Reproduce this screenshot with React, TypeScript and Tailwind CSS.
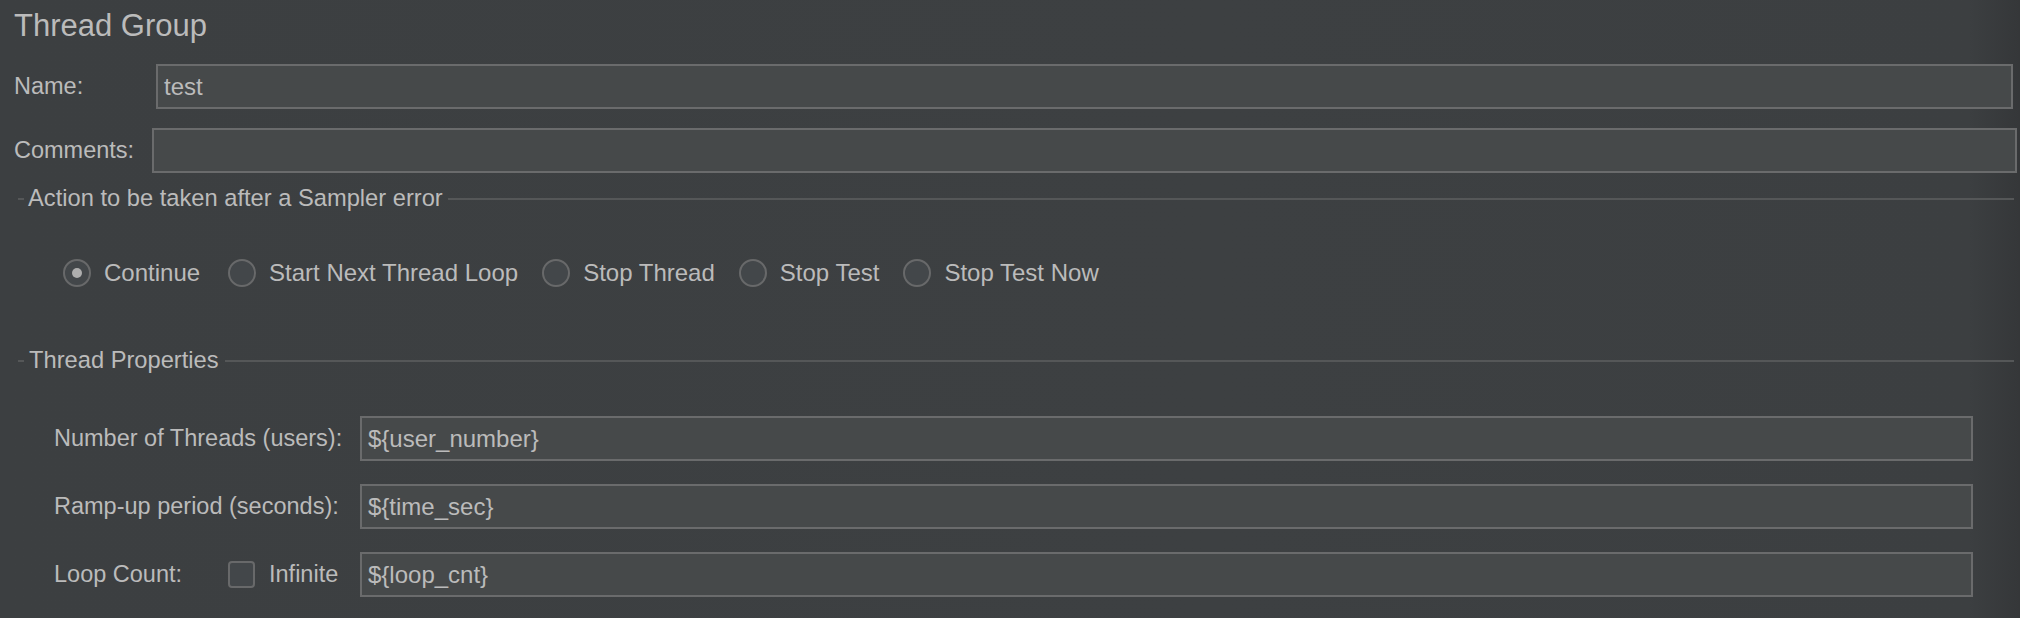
import type { ReactNode } from "react";

const font = { fontFamily: '"Liberation Sans", Arial, Helvetica, sans-serif' };

function Field({ value }: { value?: string }) {
  return (
    <div className="flex h-[45px] flex-1 items-center border-2 border-[#6a6b6c] bg-[#46494a] pl-[6px] text-[24px] text-[#bbbbbb]">
      {value}
    </div>
  );
}

function SectionHeader({ title, textGap }: { title: string; textGap: number }) {
  return (
    <div className="mr-[6px] flex h-[30px] items-center pl-[18px]">
      <div className="h-[2px] w-[6px] bg-[#555758]" />
      <span
        className={
          "whitespace-nowrap text-[23.7px] text-[#bbbbbb] " +
          (textGap === 4 ? "ml-[4px] mr-[5px]" : "ml-[5px] mr-[6px]")
        }
      >
        {title}
      </span>
      <div className="h-[2px] flex-1 bg-[#555758]" />
    </div>
  );
}

function Radio({ label, checked, wide }: { label: string; checked?: boolean; wide?: boolean }) {
  return (
    <div className="flex items-center">
      <div className="flex h-[28px] w-[28px] items-center justify-center rounded-full border-2 border-[#68696a] bg-[#43474a]">
        {checked && <div className="h-[10px] w-[10px] rounded-full bg-[#aeaeae]" />}
      </div>
      <span className={"ml-[13px] whitespace-nowrap text-[24px] text-[#bbbbbb] " + (wide ? "pr-[4px]" : "")}>
        {label}
      </span>
    </div>
  );
}

function PropRow({ left, value }: { left: ReactNode; value: string }) {
  return (
    <div className="mr-[47px] flex h-[45px] items-center pl-[54px]">
      <div className="flex w-[306px] items-center text-[23.5px] text-[#bbbbbb]">{left}</div>
      <Field value={value} />
    </div>
  );
}

export default function App() {
  return (
    <div
      className="flex h-[618px] w-[2020px] flex-col overflow-hidden bg-[linear-gradient(to_right,#3c3f41_0%,#3d4042_60%,#3c3f41_97.5%,#353739_100%)]"
      style={font}
    >
      {/* Title */}
      <div className="flex h-[52px] items-center pl-[14px] text-[31px] text-[#bbbbbb]">Thread Group</div>

      {/* Name */}
      <div className="mr-[7px] mt-[12px] flex h-[45px] items-center pl-[14px]">
        <span className="w-[142px] text-[23.5px] text-[#bbbbbb]">Name:</span>
        <Field value="test" />
      </div>

      {/* Comments */}
      <div className="mr-[3px] mt-[19px] flex h-[45px] items-center pl-[14px]">
        <span className="w-[138px] text-[23.5px] text-[#bbbbbb]">Comments:</span>
        <Field />
      </div>

      {/* Sampler error action */}
      <div className="mt-[11px]">
        <SectionHeader title="Action to be taken after a Sampler error" textGap={4} />
      </div>
      <div className="mt-[44px] flex h-[30px] items-center gap-[24px] pl-[63px]">
        <Radio label="Continue" checked wide />
        <Radio label="Start Next Thread Loop" />
        <Radio label="Stop Thread" />
        <Radio label="Stop Test" />
        <Radio label="Stop Test Now" />
      </div>

      {/* Thread properties */}
      <div className="mt-[58px]">
        <SectionHeader title="Thread Properties" textGap={5} />
      </div>
      <div className="mt-[40px] flex flex-col gap-[23px]">
        <PropRow left={<span>Number of Threads (users):</span>} value="${user_number}" />
        <PropRow left={<span>Ramp-up period (seconds):</span>} value="${time_sec}" />
        <PropRow
          left={
            <>
              <span className="w-[174px]">Loop Count:</span>
              <div className="h-[27px] w-[27px] rounded-[4px] border-2 border-[#68696a] bg-[#43474a]" />
              <span className="ml-[14px]">Infinite</span>
            </>
          }
          value="${loop_cnt}"
        />
      </div>
    </div>
  );
}
